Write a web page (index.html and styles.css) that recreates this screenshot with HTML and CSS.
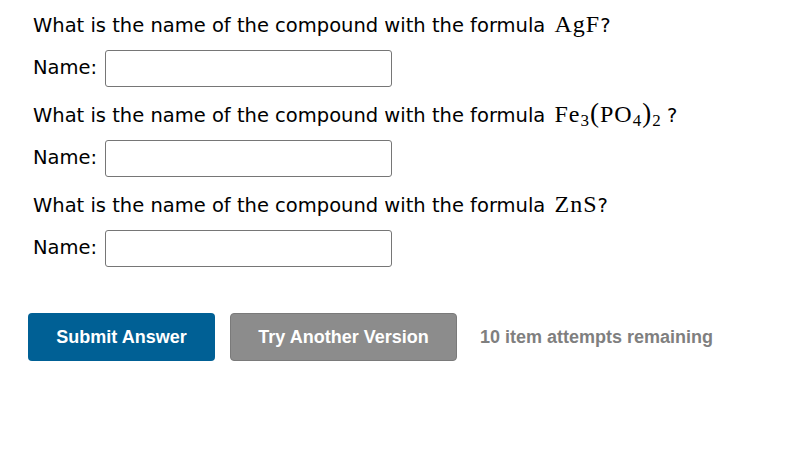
FILE: index.html
```html
<!DOCTYPE html>
<html>
<head>
<meta charset="utf-8">
<link rel="stylesheet" href="styles.css">
</head>
<body>
<div class="page">
  <div class="question">
    <p class="prompt">What is the name of the compound with the formula <span class="math">AgF</span>?</p>
    <div class="answer"><label class="label">Name:</label><input class="field" type="text"></div>
  </div>
  <div class="question">
    <p class="prompt">What is the name of the compound with the formula <span class="math">Fe<sub>3</sub><span class="paren">(</span>PO<sub>4</sub><span class="paren">)</span><sub>2</sub></span> ?</p>
    <div class="answer"><label class="label">Name:</label><input class="field" type="text"></div>
  </div>
  <div class="question">
    <p class="prompt">What is the name of the compound with the formula <span class="math">ZnS</span>?</p>
    <div class="answer"><label class="label">Name:</label><input class="field" type="text"></div>
  </div>
  <div class="actions">
    <button class="btn btn-primary">Submit Answer</button>
    <button class="btn btn-secondary">Try Another Version</button>
    <span class="attempts">10 item attempts remaining</span>
  </div>
</div>
</body>
</html>
```
FILE: styles.css
```css
html, body {
  margin: 0;
  padding: 0;
  background: #fff;
}
.page {
  padding: 11px 0 0 33px;
  font-family: "DejaVu Sans", Verdana, sans-serif;
  font-size: 19.5px;
  color: #000;
}
.question {
  height: 90px;
}
.prompt {
  margin: 0;
  height: 30px;
  line-height: 30px;
  white-space: nowrap;
}
.math {
  font-family: "Liberation Serif", "DejaVu Serif", serif;
  font-size: 24px;
  line-height: 1;
  letter-spacing: 1px;
  margin-left: 3px;
}
.math sub {
  font-size: 17px;
  letter-spacing: 0;
  vertical-align: -4px;
  line-height: 0;
}
.paren {
  font-size: 27px;
  line-height: 0;
  letter-spacing: 0;
  margin: 0 1px;
}
.answer {
  display: flex;
  align-items: center;
  gap: 8px;
  margin-top: 9px;
  height: 36px;
}
.label {
  line-height: 36px;
}
.field {
  width: 287px;
  height: 37px;
  box-sizing: border-box;
  border: 1px solid #767676;
  border-radius: 3px;
  padding: 0 6px;
  font-size: 16px;
}
.actions {
  display: flex;
  align-items: center;
  margin-left: -5px;
  margin-top: 32px;
}
.btn {
  height: 48px;
  border: none;
  border-radius: 4px;
  font-family: "Liberation Sans", Arial, sans-serif;
  font-weight: bold;
  font-size: 18px;
  color: #fff;
  padding: 0;
}
.btn-primary {
  width: 187px;
  background: #006095;
  margin-right: 15px;
}
.btn-secondary {
  width: 227px;
  background: #8c8c8c;
  border: 1px solid #7a7a7a;
  margin-right: 23px;
}
.attempts {
  font-family: "Liberation Sans", Arial, sans-serif;
  font-weight: bold;
  font-size: 18px;
  color: #7f7f7f;
}
```
